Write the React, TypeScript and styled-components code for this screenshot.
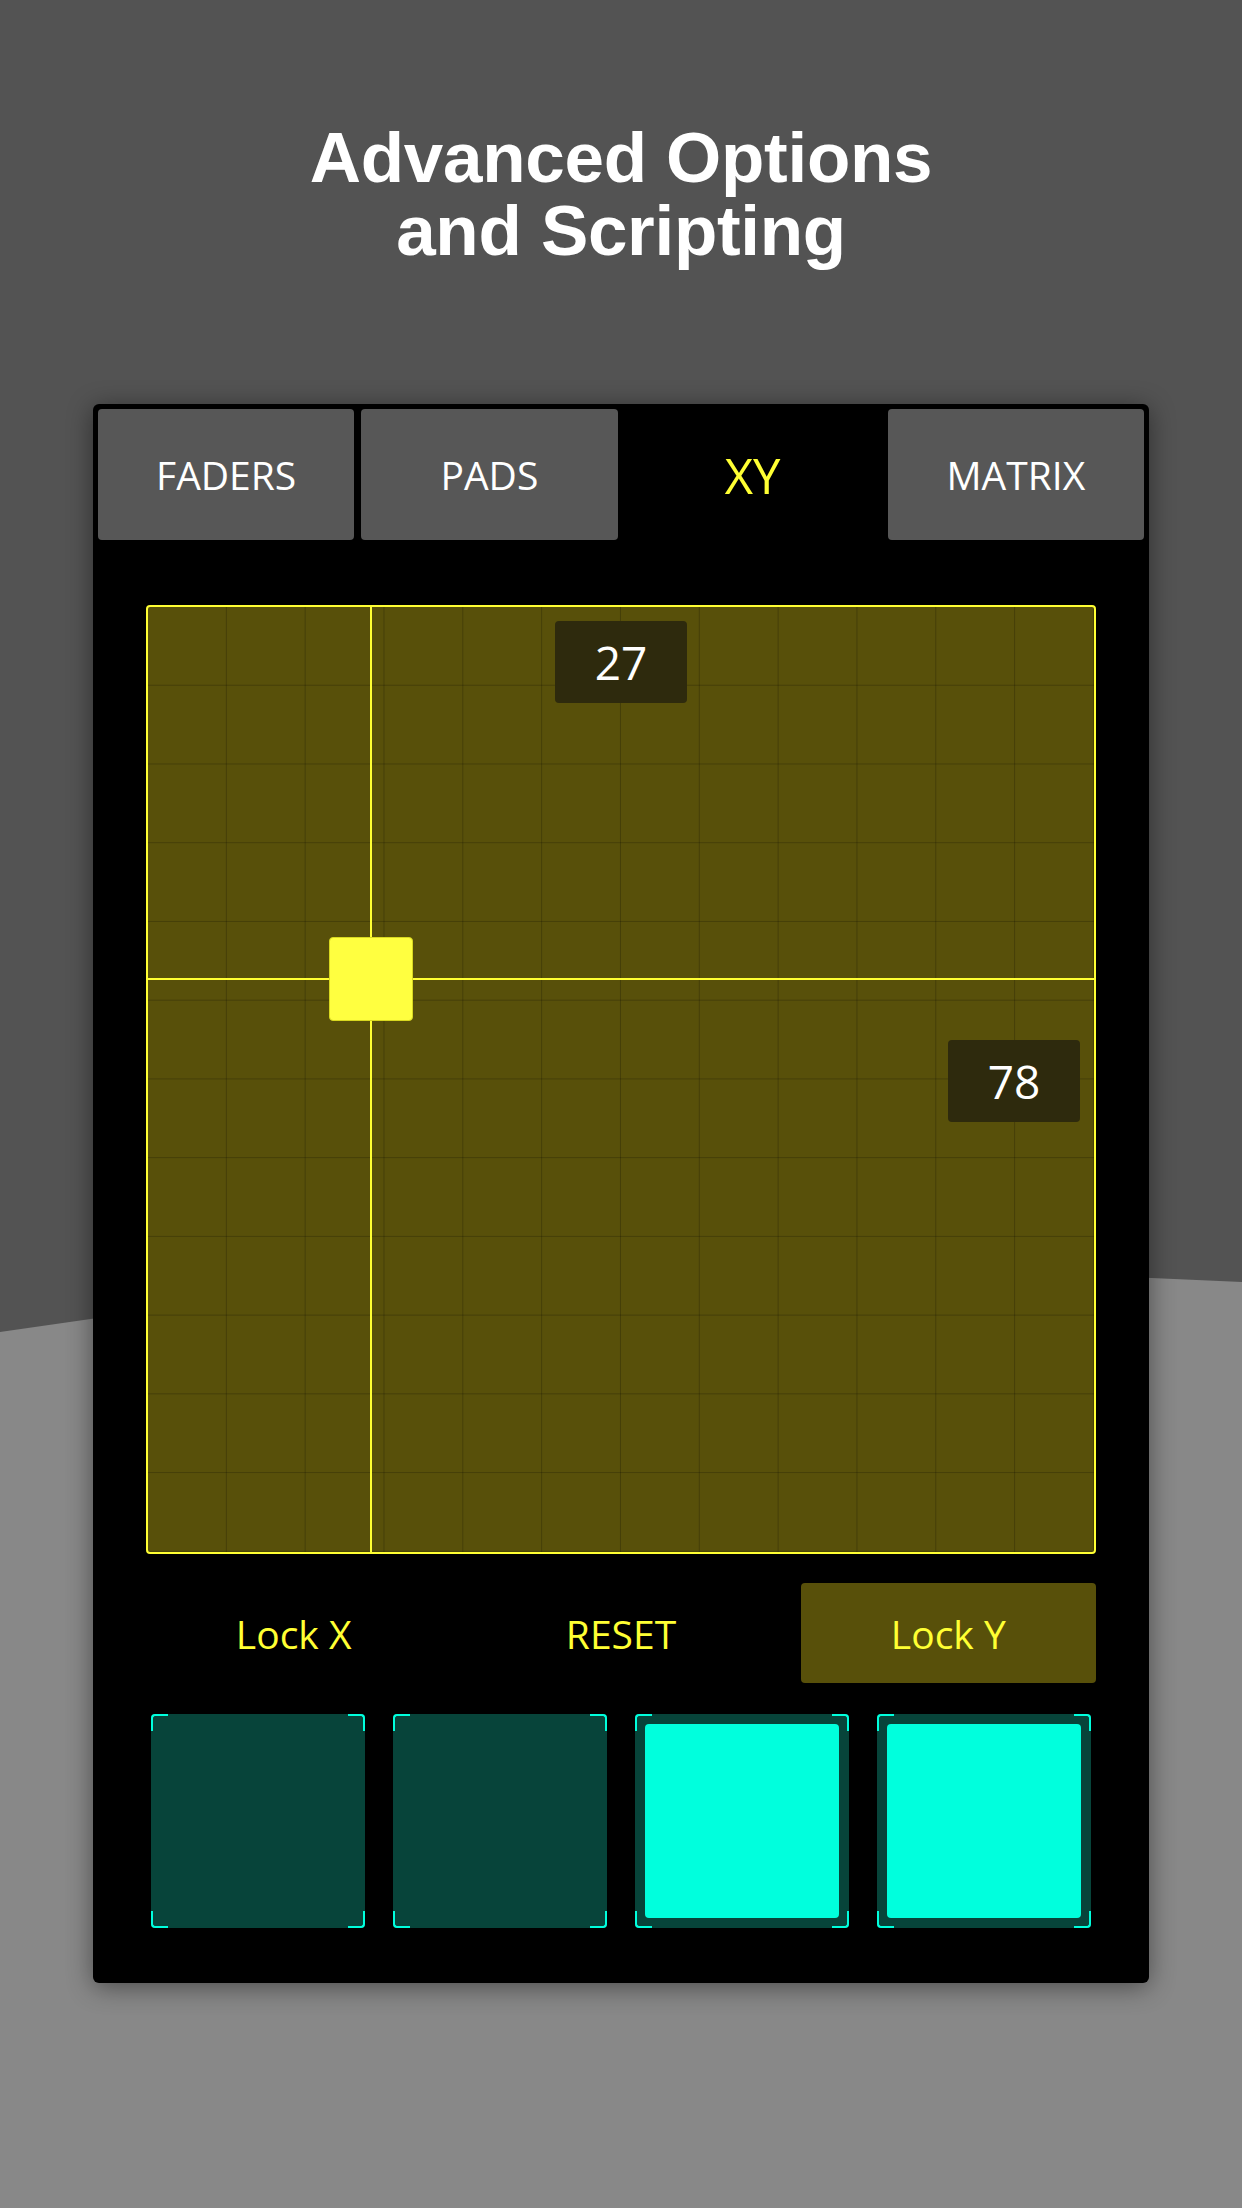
import React from "react";
import styled, { createGlobalStyle } from "styled-components";

const floorSvg =
  "data:image/svg+xml;utf8," +
  encodeURIComponent(
    "<svg xmlns='http://www.w3.org/2000/svg' width='1242' height='2208'><polygon points='0,1332 556,1252 1242,1282 1242,2208 0,2208' fill='#888888'/></svg>"
  );

const GlobalStyle = createGlobalStyle`
  html, body { margin: 0; padding: 0; background: #535353; }
  * { box-sizing: border-box; }
`;

const Page = styled.div`
  width: 1242px;
  height: 2208px;
  background-color: #535353;
  background-image: url("${floorSvg}");
  background-repeat: no-repeat;
  background-size: 1242px 2208px;
  display: flex;
  flex-direction: column;
  align-items: center;
  overflow: hidden;
`;

const Title = styled.h1`
  margin: 121px 0 0;
  font-family: "Liberation Sans", Arial, sans-serif;
  font-weight: 700;
  font-size: 71px;
  line-height: 73px;
  color: #ffffff;
  text-align: center;
  letter-spacing: -0.3px;
`;

const Panel = styled.div`
  margin-top: 137px;
  width: 1056px;
  height: 1579px;
  background: #000;
  border-radius: 6px;
  padding: 5px;
  box-shadow: 0 4px 26px rgba(0, 0, 0, 0.45);
  display: flex;
  flex-direction: column;
  font-family: "Open Sans", "Noto Sans", sans-serif;
`;

const Tabs = styled.div`
  display: grid;
  grid-template-columns: repeat(4, 1fr);
  gap: 7px;
  height: 131px;
`;

const Tab = styled.div<{ $active?: boolean }>`
  display: flex;
  align-items: center;
  justify-content: center;
  border-radius: 4px;
  background: ${(p) => (p.$active ? "transparent" : "#575757")};
  color: ${(p) => (p.$active ? "#ffff33" : "#ffffff")};
  font-size: ${(p) => (p.$active ? "49px" : "39px")};
  font-weight: 400;
`;

const Body = styled.div`
  padding: 65px 48px 0;
  display: flex;
  flex-direction: column;
`;

const XYPad = styled.div`
  position: relative;
  width: 950px;
  height: 949px;
  border: 2px solid #ffff33;
  border-radius: 4px;
  background-color: #58500a;
  background-image:
    linear-gradient(to right, rgba(0, 0, 0, 0.22) 1px, transparent 1px),
    linear-gradient(to bottom, rgba(0, 0, 0, 0.22) 1px, transparent 1px);
  background-size: calc(100% / 12) calc(100% / 12);
  background-position: -1px -1px;
  overflow: hidden;
`;

const VLine = styled.div`
  position: absolute;
  top: 0;
  bottom: 0;
  width: 2px;
  background: #ffff33;
`;

const HLine = styled.div`
  position: absolute;
  left: 0;
  right: 0;
  height: 2px;
  background: #ffff33;
`;

const Handle = styled.div`
  position: absolute;
  width: 84px;
  height: 84px;
  border-radius: 4px;
  background: #ffff40;
  border: 1px solid #d8d820;
`;

const ValueLabel = styled.div`
  position: absolute;
  width: 132px;
  height: 82px;
  border-radius: 4px;
  background: #2e2a0d;
  color: #fff;
  font-size: 46px;
  display: flex;
  align-items: center;
  justify-content: center;
`;

const ButtonRow = styled.div`
  margin-top: 29px;
  display: grid;
  grid-template-columns: repeat(3, 1fr);
  gap: 32px;
  height: 100px;
`;

const Btn = styled.div<{ $on?: boolean }>`
  display: flex;
  align-items: center;
  justify-content: center;
  border-radius: 4px;
  background: ${(p) => (p.$on ? "#58500a" : "transparent")};
  color: #ffff33;
  font-size: 39px;
`;

const PadRow = styled.div`
  margin-top: 31px;
  padding: 0 5px;
  display: grid;
  grid-template-columns: repeat(4, 1fr);
  gap: 28px;
`;

const Pad = styled.div`
  position: relative;
  height: 214px;
  background: #07443a;
  border-radius: 4px;
  padding: 10px;
  display: flex;
`;

const PadFill = styled.div`
  flex: 1;
  background: #00ffdd;
  border-radius: 4px;
`;

const Corner = styled.div<{ $v: "top" | "bottom"; $h: "left" | "right" }>`
  position: absolute;
  width: 17px;
  height: 17px;
  ${(p) => p.$v}: 0;
  ${(p) => p.$h}: 0;
  border-${(p) => p.$v}: 2px solid #00ffdd;
  border-${(p) => p.$h}: 2px solid #00ffdd;
  border-${(p) => p.$v}-${(p) => p.$h}-radius: 4px;
`;

const corners: Array<["top" | "bottom", "left" | "right"]> = [
  ["top", "left"],
  ["top", "right"],
  ["bottom", "left"],
  ["bottom", "right"],
];

const PadCell: React.FC<{ on?: boolean }> = ({ on }) => (
  <Pad>
    {corners.map(([v, h]) => (
      <Corner key={v + h} $v={v} $h={h} />
    ))}
    {on && <PadFill />}
  </Pad>
);

export default function App() {
  const cx = 223;
  const cy = 372;
  return (
    <>
      <GlobalStyle />
      <Page>
        <Title>
          Advanced Options
          <br />
          and Scripting
        </Title>
        <Panel>
          <Tabs>
            <Tab>FADERS</Tab>
            <Tab>PADS</Tab>
            <Tab $active>XY</Tab>
            <Tab>MATRIX</Tab>
          </Tabs>
          <Body>
            <XYPad>
              <VLine style={{ left: cx - 1 }} />
              <HLine style={{ top: cy - 1 }} />
              <Handle style={{ left: cx - 42, top: cy - 42 }} />
              <ValueLabel style={{ left: 407, top: 14 }}>27</ValueLabel>
              <ValueLabel style={{ left: 800, top: 433 }}>78</ValueLabel>
            </XYPad>
            <ButtonRow>
              <Btn>Lock X</Btn>
              <Btn>RESET</Btn>
              <Btn $on>Lock Y</Btn>
            </ButtonRow>
            <PadRow>
              <PadCell />
              <PadCell />
              <PadCell on />
              <PadCell on />
            </PadRow>
          </Body>
        </Panel>
      </Page>
    </>
  );
}
